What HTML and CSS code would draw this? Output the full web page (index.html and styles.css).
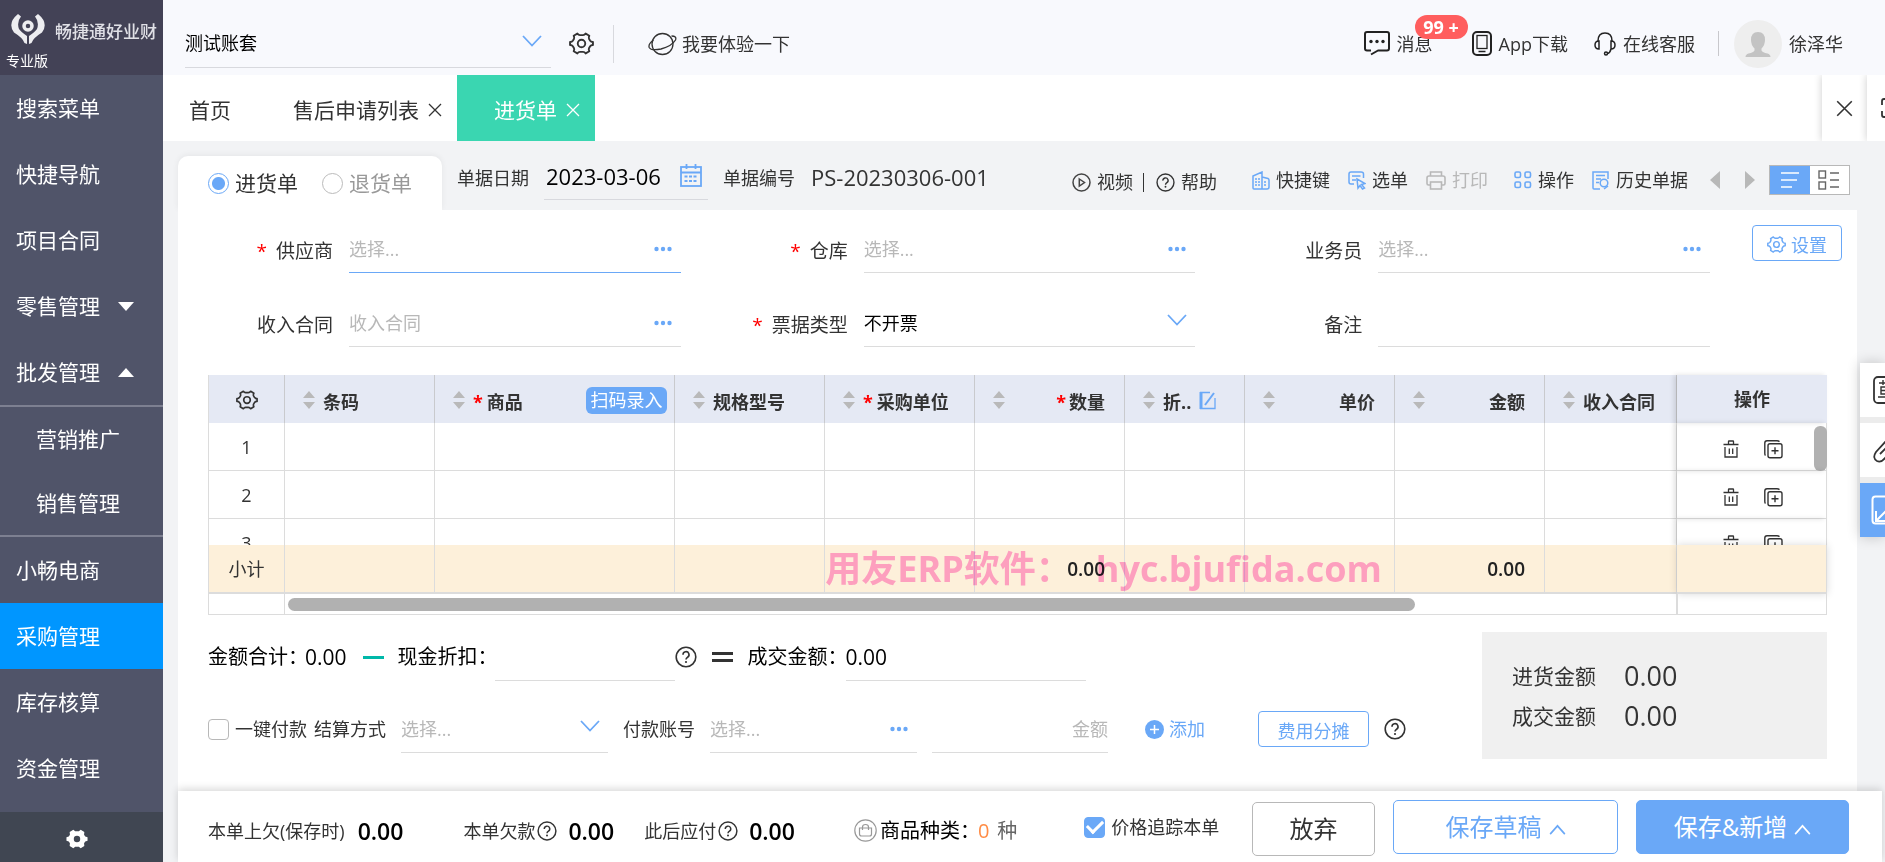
FILE: index.html
```
<!DOCTYPE html>
<html lang="zh-CN">
<head>
<meta charset="utf-8">
<title>进货单</title>
<link rel="stylesheet" href="styles.css">
</head>
<body>
<svg class="defs" aria-hidden="true">
  <symbol id="gear" viewBox="0 0 24 24"><path fill="none" stroke="currentColor" stroke-width="1.8" stroke-linejoin="round" d="M8 2.500 Q9 4 10.500 4 H13.500 Q15 4 16 2.500 L19.500 4.600 Q18.600 6.200 19.200 7.500 L20.300 9.400 Q21.200 10.600 23 10.500 V13.500 Q21.200 13.400 20.300 14.600 L19.200 16.500 Q18.600 17.800 19.500 19.400 L16 21.500 Q15 20 13.500 20 H10.500 Q9 20 8 21.500 L4.500 19.400 Q5.400 17.800 4.800 16.500 L3.700 14.600 Q2.800 13.400 1 13.500 V10.500 Q2.800 10.600 3.700 9.400 L4.800 7.500 Q5.400 6.200 4.500 4.600 Z"/><circle cx="12" cy="12" r="3.600" fill="none" stroke="currentColor" stroke-width="1.800"/></symbol>
  <symbol id="gear-solid" viewBox="0 0 24 24"><path fill="currentColor" fill-rule="evenodd" d="M8 2 L10 3.500 H14 L16 2 L20 4.400 L19.700 7.300 L21 9.400 L23.500 10 V14 L21 14.600 L19.700 16.700 L20 19.600 L16 22 L14 20.500 H10 L8 22 L4 19.600 L4.300 16.700 L3 14.600 L.5 14 V10 L3 9.400 L4.300 7.300 L4 4.400 Z M12 8.500 a3.500 3.500 0 1 0 0 7 a3.500 3.500 0 1 0 0 -7 Z"/></symbol>
  <symbol id="chev" viewBox="0 0 20 12"><path fill="none" stroke="currentColor" stroke-width="1.800" d="M1 1 L10 10.500 L19 1"/></symbol>
  <symbol id="chev-up" viewBox="0 0 18 12"><path fill="none" stroke="currentColor" stroke-width="1.800" d="M1 11 L9 2 L17 11"/></symbol>
  <symbol id="dots" viewBox="0 0 18 6"><g fill="currentColor"><circle cx="2.500" cy="3" r="2.200"/><circle cx="9" cy="3" r="2.200"/><circle cx="15.500" cy="3" r="2.200"/></g></symbol>
  <symbol id="cross" viewBox="0 0 14 14"><path fill="none" stroke="currentColor" stroke-width="1.300" d="M1 1 L13 13 M13 1 L1 13"/></symbol>
  <symbol id="help" viewBox="0 0 22 22"><g fill="none" stroke="currentColor" stroke-width="1.600"><circle cx="11" cy="11" r="9.800"/><path d="M8 8.800 a3 3 0 1 1 4.600 2.400 Q11 12.200 11 13.600"/></g><circle cx="11" cy="16" r="1.100" fill="currentColor"/></symbol>
  <symbol id="trash" viewBox="0 0 16 18"><g fill="none" stroke="currentColor" stroke-width="1.300"><path d="M.5 4.500 H15.500 M5.500 4 V1.500 Q5.500 1 6 1 H10 Q10.500 1 10.500 1.500 V4 M2 7 V17 H14 V7 M6.300 8.500 V14 M9.700 8.500 V14"/></g></symbol>
  <symbol id="copy" viewBox="0 0 19 19"><g fill="none" stroke="currentColor" stroke-width="1.400"><rect x="4" y="3.800" width="14" height="14" rx="2"/><path d="M1.500 15.500 Q.8 14.800 .8 13.500 V3 Q.8 .8 3 .8 H13 Q14.500 .8 15.500 1.600 M11 7.300 V14.300 M7.500 10.800 H14.500"/></g></symbol>
  <symbol id="sort" viewBox="0 0 12 18"><path fill="#b9b9b9" d="M6 0 L12 7 H0 Z M0 11 H12 L6 18 Z"/></symbol>
</svg>
<div class="app">
  <aside class="side">
    <div class="brand">
      <div class="brand-row">
        <svg width="36" height="30" viewBox="0 0 36 30"><g fill="#ededf0"><path d="M8 0 L11 2.500 Q6.500 8 9 15 Q11 18 17 22 V30 L14.500 29 Q13 24 4 18.500 Q-3 9 8 0 Z"/><path d="M28 0 L25 2.500 Q29.500 8 27 15 Q25 18 19 22 V30 L21.500 29 Q23 24 32 18.500 Q39 9 28 0 Z"/></g><circle cx="18" cy="12" r="4" fill="none" stroke="#ededf0" stroke-width="3.500"/></svg>
        <span class="brand-name">畅捷通好业财</span>
      </div>
      <span class="edition">专业版</span>
    </div>
    <nav class="menu">
      <a href="#">搜索菜单</a>
      <a href="#">快捷导航</a>
      <a href="#">项目合同</a>
      <a href="#">零售管理<i class="tri down"></i></a>
      <a href="#">批发管理<i class="tri up"></i></a>
      <div class="sub">
        <a href="#">营销推广</a>
        <a href="#">销售管理</a>
      </div>
      <a href="#">小畅电商</a>
      <a href="#" class="on">采购管理</a>
      <a href="#">库存核算</a>
      <a href="#">资金管理</a>
    </nav>
    <button class="side-set" aria-label="系统设置"><svg width="22" height="22"><use href="#gear-solid"/></svg></button>
  </aside>

  <div class="main">
    <header class="top">
      <div class="account">
        <select aria-label="账套"><option>测试账套</option></select>
        <svg class="blue" width="20" height="12"><use href="#chev"/></svg>
      </div>
      <button class="icon-btn" aria-label="设置"><svg width="25" height="25"><use href="#gear"/></svg></button>
      <span class="vline tall"></span>
      <a href="#" class="trial"><svg width="29" height="24" viewBox="0 0 29 24"><g fill="none" stroke="#333" stroke-width="1.300"><circle cx="14.500" cy="12" r="10.500"/><path d="M5.500 8 Q0 12 1.200 15.500 Q3 19 13 17 Q24 14 27.500 8 Q29 4 23.500 4"/></g></svg>我要体验一下</a>
      <div class="top-right">
        <a href="#" class="msg"><svg width="26" height="25" viewBox="0 0 26 25"><path fill="none" stroke="#222" stroke-width="2" stroke-linejoin="round" d="M7 19.500 H3 Q1 19.500 1 17.500 V3 Q1 1 3 1 H23 Q25 1 25 3 V17.500 Q25 19.500 23 19.500 H14 L7 23.500"/><g fill="#222"><circle cx="7" cy="10.500" r="1.700"/><circle cx="13" cy="10.500" r="1.700"/><circle cx="19" cy="10.500" r="1.700"/></g></svg>消息<b class="badge">99 +</b></a>
        <a href="#" class="phone"><svg width="20" height="25" viewBox="0 0 20 25"><g fill="none" stroke="#222"><rect x="1" y="1" width="18" height="23" rx="4" stroke-width="2"/><rect x="5" y="4.500" width="10" height="13" stroke-width="1.300"/><path d="M6.500 20.500 H13.500" stroke-width="1.500"/></g></svg>App下载</a>
        <a href="#" class="serv"><svg width="22" height="24" viewBox="0 0 22 24"><g fill="none" stroke="#222" stroke-width="1.500"><path d="M4 9 Q4 1 11 1 Q18 1 18 9"/><path d="M5 9 V17 Q1 17 1 13 Q1 9 5 9 Z M17 9 V17 Q21 17 21 13 Q21 9 17 9 Z M17 17 Q16 21 13.500 21.500"/><circle cx="12" cy="21.500" r="1.500"/></g></svg>在线客服</a>
        <span class="vline"></span>
        <a href="#" class="user"><svg width="48" height="48" viewBox="0 0 48 48"><circle cx="24" cy="24" r="24" fill="#eeeeee"/><path fill="#c3c3c3" d="M24 12 q7 0 7 8 q0 5 -3.500 8.500 v2 q1 2 6 3 q3 1 3 3.500 H11.500 q0 -2.500 3 -3.500 q5 -1 6 -3 v-2 Q17 25 17 20 q0 -8 7 -8 Z"/></svg>徐泽华</a>
      </div>
    </header>

    <div class="tabs">
      <a href="#" class="tab home">首页</a>
      <a href="#" class="tab list">售后申请列表<svg width="14" height="14"><use href="#cross"/></svg></a>
      <a href="#" class="tab on">进货单<svg width="14" height="14"><use href="#cross"/></svg></a>
      <button class="tab-tool close" aria-label="关闭全部"><svg width="17" height="17"><use href="#cross"/></svg></button>
      <button class="tab-tool full" aria-label="全屏"><svg width="20" height="20" viewBox="0 0 20 20"><path fill="none" stroke="#333" stroke-width="1.800" d="M1 7 V3 Q1 1 3 1 H7 M1 13 V17 Q1 19 3 19 H7"/></svg></button>
    </div>

    <div class="doc">
      <div class="doc-head">
        <div class="kinds">
          <label><input type="radio" name="kind" checked>进货单</label>
          <label class="dim"><input type="radio" name="kind">退货单</label>
        </div>
        <label class="cap" for="date">单据日期</label>
        <div class="date"><input id="date" type="text" value="2023-03-06"><svg width="22" height="23" viewBox="0 0 22 23"><g fill="none" stroke="#6aa8f7" stroke-width="1.800"><rect x="1" y="3" width="20" height="19"/><path d="M1 8.500 H21 M6.500 0 V5 M15.500 0 V5"/><path stroke-dasharray="3 1.500" d="M4.500 12.500 H18 M4.500 17 H18"/></g></svg></div>
        <span class="cap">单据编号</span>
        <span class="docno">PS-20230306-001</span>
        <div class="tools">
          <a href="#" class="low"><svg width="19" height="19" viewBox="0 0 19 19"><g fill="none" stroke="#444" stroke-width="1.500"><circle cx="9.500" cy="9.500" r="8.500"/><path d="M7.300 6 L12.500 9.500 L7.300 13 Z"/></g></svg>视频</a>
          <span class="bar"></span>
          <a href="#" class="low help-link"><svg width="19" height="19"><use href="#help"/></svg>帮助</a>
          <a href="#" class="t1"><svg width="18" height="19" viewBox="0 0 18 19"><g fill="none" stroke="#6aa8f7" stroke-width="1.500"><path d="M1 17 V5 L10 1 V18 H2 Q1 18 1 17 M10 6 L16 7.500 Q17 8 17 9 V16 Q17 18 15 18 H10"/><path stroke-dasharray="2 1" d="M3 8 H9 M3 11 H9 M3 14 H9 M12 11 H15 M12 14 H15"/></g></svg>快捷键</a>
          <a href="#" class="t2"><svg width="18" height="19" viewBox="0 0 18 19"><g fill="none" stroke="#6aa8f7" stroke-width="1.500"><path d="M6 13 H3 Q1 13 1 11 V3 Q1 1 3 1 H13 Q15.500 1 15.500 3 V7 M4 5 H12.500 M4 9 H8"/><path d="M9 8 L17 12.500 L13.500 13.500 L16.500 17 L14.500 18 L12 14.500 L10 17 Z"/></g></svg>选单</a>
          <a href="#" class="t3 off"><svg width="20" height="19" viewBox="0 0 20 19"><g fill="none" stroke="#b8b8b8" stroke-width="1.600"><path d="M4.500 5 V1 H15.500 V5 M4 14 H2.500 Q1 14 1 12.500 V7 Q1 5 3 5 H17 Q19 5 19 7 V12.500 Q19 14 17.500 14 H16"/><rect x="4.500" y="11" width="11" height="7"/></g></svg>打印</a>
          <a href="#" class="t4"><svg width="18" height="18" viewBox="0 0 18 18"><g fill="none" stroke="#6aa8f7" stroke-width="1.600"><rect x="1" y="1" width="5.500" height="5.500" rx="1.500"/><rect x="11" y="1" width="5.500" height="5.500" rx="1.500"/><rect x="1" y="11" width="5.500" height="5.500" rx="1.500"/><rect x="11" y="11" width="5.500" height="5.500" rx="1.500"/></g></svg>操作</a>
          <a href="#" class="t2"><svg width="18" height="19" viewBox="0 0 18 19"><g fill="none" stroke="#6aa8f7" stroke-width="1.500"><path d="M8 18 H2 Q1 18 1 17 V1 H16 V8 M4 4.500 H13 M4 8 H9 M4 11.500 H7"/><circle cx="12" cy="12" r="3.800"/><path d="M12 18 L16 15"/></g></svg>历史单据</a>
          <button class="step prev" aria-label="上一单"></button>
          <button class="step next" aria-label="下一单"></button>
          <div class="views">
            <button class="on" aria-label="列表视图"><svg width="20" height="18" viewBox="0 0 20 18"><path stroke="#fff" stroke-width="1.600" d="M1 2 H19 M1 9 H17 M1 16 H12"/></svg></button>
            <button aria-label="卡片视图"><svg width="22" height="20" viewBox="0 0 22 20"><g fill="none" stroke="#666" stroke-width="1.400"><rect x="1" y="1" width="6.500" height="7"/><rect x="1" y="12" width="6.500" height="7"/><path d="M12 3 H21 M12 10 H21 M12 17 H21"/></g></svg></button>
          </div>
        </div>
      </div>

      <section class="card">
        <div class="form">
          <div class="fields">
            <label for="f1"><i>*</i>供应商</label>
            <div class="field focus"><input id="f1" placeholder="选择..."><button aria-label="选择供应商"><svg width="18" height="6"><use href="#dots"/></svg></button></div>
            <label for="f2"><i>*</i>仓库</label>
            <div class="field"><input id="f2" placeholder="选择..."><button aria-label="选择仓库"><svg width="18" height="6"><use href="#dots"/></svg></button></div>
            <label for="f3">业务员</label>
            <div class="field"><input id="f3" placeholder="选择..."><button aria-label="选择业务员"><svg width="18" height="6"><use href="#dots"/></svg></button></div>
            <label for="f4">收入合同</label>
            <div class="field"><input id="f4" placeholder="收入合同"><button aria-label="选择收入合同"><svg width="18" height="6"><use href="#dots"/></svg></button></div>
            <label for="f5"><i>*</i>票据类型</label>
            <div class="field drop"><select id="f5"><option>不开票</option></select><svg width="20" height="12"><use href="#chev"/></svg></div>
            <label for="f6">备注</label>
            <div class="field"><input id="f6"></div>
          </div>
          <button class="btn-line set"><svg width="19" height="19"><use href="#gear"/></svg>设置</button>
        </div>

        <div class="grid">
          <table>
            <colgroup><col class="c-no"><col class="c-m"><col class="c-l"><col class="c-m"><col class="c-m"><col class="c-m"><col class="c-s"><col class="c-m"><col class="c-m"><col><col class="c-m"></colgroup>
            <thead>
              <tr>
                <th><svg class="g" width="22" height="22"><use href="#gear"/></svg></th>
                <th><div><svg width="12" height="18"><use href="#sort"/></svg>条码</div></th>
                <th><div><svg width="12" height="18"><use href="#sort"/></svg><i>*</i>商品<button class="scan">扫码录入</button></div></th>
                <th><div><svg width="12" height="18"><use href="#sort"/></svg>规格型号</div></th>
                <th><div><svg width="12" height="18"><use href="#sort"/></svg><i>*</i>采购单位</div></th>
                <th><div><svg width="12" height="18"><use href="#sort"/></svg><span class="r"><i>*</i>数量</span></div></th>
                <th><div><svg width="12" height="18"><use href="#sort"/></svg>折..<svg width="17" height="19" viewBox="0 0 17 19"><g fill="none" stroke="#6aa8f7"><path stroke-width="3" d="M2 1 V18"/><path stroke-width="1.300" d="M11 1.500 H1 M1 17.500 H16 V7"/><path stroke-width="2" d="M6 14 L15 2"/></g></svg></div></th>
                <th><div><svg width="12" height="18"><use href="#sort"/></svg><span class="r">单价</span></div></th>
                <th><div><svg width="12" height="18"><use href="#sort"/></svg><span class="r">金额</span></div></th>
                <th><div><svg width="12" height="18"><use href="#sort"/></svg>收入合同</div></th>
                <th class="act">操作</th>
              </tr>
            </thead>
            <tbody>
              <tr><td>1</td><td></td><td></td><td></td><td></td><td></td><td></td><td></td><td></td><td></td><td class="act"><div class="ops"><button aria-label="删除"><svg width="16" height="18"><use href="#trash"/></svg></button><button aria-label="复制"><svg width="19" height="19"><use href="#copy"/></svg></button></div><span class="vthumb"></span></td></tr>
              <tr><td>2</td><td></td><td></td><td></td><td></td><td></td><td></td><td></td><td></td><td></td><td class="act"><div class="ops"><button aria-label="删除"><svg width="16" height="18"><use href="#trash"/></svg></button><button aria-label="复制"><svg width="19" height="19"><use href="#copy"/></svg></button></div></td></tr>
              <tr class="cut"><td><div class="clip"><span>3</span></div></td><td></td><td></td><td></td><td></td><td></td><td></td><td></td><td></td><td></td><td class="act"><div class="clip"><div class="ops"><button aria-label="删除"><svg width="16" height="18"><use href="#trash"/></svg></button><button aria-label="复制"><svg width="19" height="19"><use href="#copy"/></svg></button></div></div></td></tr>
            </tbody>
            <tfoot>
              <tr class="sum"><td>小计</td><td></td><td></td><td></td><td></td><td class="num">0.00</td><td></td><td></td><td class="num">0.00</td><td></td><td class="act"></td></tr>
              <tr class="scroll"><td></td><td colspan="9"><div class="hthumb"></div></td><td class="act"></td></tr>
            </tfoot>
          </table>
          <div class="mark">用友ERP软件：<span>hyc.bjufida.com</span></div>
        </div>

        <div class="settle">
          <div class="lines">
            <div class="line big">
              <span>金额合计：</span><span class="total">0.00</span><span class="minus"></span>
              <label for="disc">现金折扣：</label><div class="field w180"><input id="disc"></div>
              <svg width="22" height="22"><use href="#help"/></svg><span class="equal"></span>
              <label for="deal">成交金额：</label><div class="field w240"><input id="deal" value="0.00"></div>
            </div>
            <div class="line">
              <label class="pay"><input type="checkbox">一键付款</label>
              <label class="way" for="way">结算方式</label>
              <div class="field drop w207"><select id="way" class="ph"><option>选择...</option></select><svg width="20" height="12"><use href="#chev"/></svg></div>
              <label class="acc" for="acc">付款账号</label>
              <div class="field w207"><input id="acc" placeholder="选择..."><button aria-label="选择付款账号"><svg width="18" height="6"><use href="#dots"/></svg></button></div>
              <div class="field amount"><input aria-label="金额" placeholder="金额"></div>
              <button class="add"><svg width="19" height="19" viewBox="0 0 19 19"><circle cx="9.500" cy="9.500" r="9.500" fill="#6aa8f7"/><path stroke="#fff" stroke-width="1.500" d="M9.500 5 V14 M5 9.500 H14"/></svg>添加</button>
              <button class="btn-line share">费用分摊</button>
              <svg width="22" height="22"><use href="#help"/></svg>
            </div>
          </div>
          <dl class="summary"><dt>进货金额</dt><dd>0.00</dd><dt>成交金额</dt><dd>0.00</dd></dl>
        </div>
      </section>
      <footer class="foot">
        <span>本单上欠(保存时)</span><b>0.00</b>
        <span class="g1">本单欠款</span><svg width="20" height="20"><use href="#help"/></svg><b class="n">0.00</b>
        <span class="g2">此后应付</span><svg width="20" height="20"><use href="#help"/></svg><b class="n">0.00</b>
        <span class="kindcount"><svg width="23" height="23" viewBox="0 0 23 23"><g fill="none" stroke="#999" stroke-width="1.200"><circle cx="11.500" cy="11.500" r="10.700"/><path d="M5.500 9 H17.500 V15 Q17.500 17 15.500 17 H7.500 Q5.500 17 5.500 15 Z M8.500 11 V8 Q8.500 5.500 11.500 5.500 Q14.500 5.500 14.500 8 V11"/></g></svg>商品种类：<em>0</em><small>种</small></span>
        <label class="trace"><input type="checkbox" checked>价格追踪本单</label>
        <div class="actions">
          <button class="b-plain">放弃</button>
          <button class="b-draft">保存草稿<svg width="17" height="11"><use href="#chev-up"/></svg></button>
          <button class="b-save">保存&amp;新增<svg width="17" height="11"><use href="#chev-up"/></svg></button>
        </div>
      </footer>
    </div>
  </div>
</div>
<div class="dock">
  <button aria-label="草稿"><svg width="28" height="28" viewBox="0 0 28 28"><rect x="1" y="1" width="26" height="26" rx="4" fill="none" stroke="#333" stroke-width="1.800"/><path fill="none" stroke="#333" stroke-width="1.400" d="M6 7 H22 M10 4 V9 M8 11 H20 V18 H8 Z M8 14.500 H20 M5 21 H23"/></svg></button>
  <button aria-label="附件"><svg width="26" height="26" viewBox="0 0 26 26"><path fill="none" stroke="#333" stroke-width="1.800" d="M14 3 L3 15 Q-1 21 4 24 Q8 26 12 21 L22 10 M7 17 L16 8"/></svg></button>
  <button class="on" aria-label="收起"><svg width="30" height="30" viewBox="0 0 30 30"><rect x="1.500" y="1.500" width="27" height="27" rx="3" fill="none" stroke="#fff" stroke-width="2"/><path fill="none" stroke="#fff" stroke-width="2" d="M5 16 V26 H15 M5 26 L16 15"/></svg></button>
</div>
</body>
</html>
```
FILE: styles.css
```
* { box-sizing: border-box; }
body { margin: 0; background: #f2f3f5; color: #333; font: 18px/24px "Open Sans", "Noto Sans CJK SC", sans-serif; }
a { color: inherit; text-decoration: none; }
button, input, select { margin: 0; padding: 0; border: 0; background: none; font: inherit; color: inherit; outline: 0; }
select { appearance: none; }
svg { flex: none; display: block; }
i, em { font-style: normal; }
.defs { position: absolute; width: 0; height: 0; }
.blue { color: #6aa8f7; }
.app { display: flex; min-height: 100vh; }

/* sidebar */
.side { flex: none; width: 163px; display: flex; flex-direction: column; background: #505469; color: #fff; }
.brand { height: 75px; background: #434256; padding: 14px 6px 0 10px; }
.brand-row { display: flex; align-items: center; gap: 9px; height: 30px; }
.brand-name { font-size: 17px; font-weight: 500; color: #e0e0e6; white-space: nowrap; padding-top: 6px; }
.edition { display: block; margin: 5px 0 0 -4px; font-size: 14px; }
.menu { font-size: 21px; flex: 1; }
.menu a { display: flex; align-items: center; height: 66px; padding-left: 16px; }
.menu .on { background: #0096ff; }
.sub { border: 1px solid #7d8091; border-width: 2px 0; }
.sub a { height: 64px; padding-left: 36px; }
.tri { margin-left: 18px; border: 8px solid transparent; }
.tri.down { border-top: 9px solid #fff; border-bottom: 0; }
.tri.up { border-bottom: 9px solid #fff; border-top: 0; }
.side-set { height: 50px; background: #404652; color: #fff; display: flex; align-items: center; justify-content: center; padding: 4px 10px 0 0; }

/* header */
.main { flex: 1; min-width: 0; display: flex; flex-direction: column; }
.top { height: 75px; background: #f8f9fd; display: flex; align-items: center; padding: 12px 42px 0 22px; }
.account { width: 366px; height: 48px; display: flex; align-items: center; border-bottom: 1px solid #d8d9de; padding-right: 9px; }
.account select { flex: 1; height: 46px; color: #000; }
.account svg { margin-bottom: 4px; }
.icon-btn { margin-left: 18px; }
.vline { width: 1px; height: 25px; background: #c8c8cc; }
.vline.tall { height: 38px; margin: 0 34px 0 19px; background: #d8d9de; }
.trial, .top-right, .top-right a { display: flex; align-items: center; }
.trial { gap: 5px; }
.top-right { margin-left: auto; white-space: nowrap; }
.top-right a { gap: 7px; }
.msg { position: relative; }
.badge { position: absolute; left: 51px; top: -16px; width: 53px; height: 24px; border-radius: 12px; background: #ff5e5e; color: #fff; text-align: center; }
.phone { margin-left: 39px; }
.serv { margin-left: 26px; }
.top-right .vline { margin: 0 15px 0 23px; }

/* tabs */
.tabs { height: 66px; background: #fff; display: flex; font-size: 21px; overflow: hidden; }
.tab { display: flex; align-items: center; gap: 9px; padding: 4px 15px 0 0; color: #333; }
.home { padding-left: 26px; width: 130px; }
.tab.on { background: #3ad6b1; color: #fff; padding-left: 37px; }
.tab-tool { width: 45px; display: flex; align-items: center; justify-content: center; box-shadow: 0 0 8px rgba(0,0,0,.2); background: #fff; }
.tab-tool.close { margin-left: auto; }
.tab-tool.full { width: 18px; justify-content: flex-start; padding-left: 14px; overflow: hidden; }

/* document heading */
.doc { flex: 1; display: flex; flex-direction: column; padding: 15px 0 0 15px; }
.doc-head { display: flex; height: 54px; padding-right: 35px; white-space: nowrap; }
.kinds { width: 264px; background: #fff; border-radius: 10px 10px 0 0; display: flex; align-items: center; gap: 24px; padding-left: 30px; font-size: 21px; box-shadow: 0 -1px 6px rgba(0,0,0,.06); }
.kinds label { display: flex; align-items: center; gap: 6px; }
.kinds .dim { color: #999; }
input[type=radio] { appearance: none; width: 21px; height: 21px; border: 1px solid #bbb; border-radius: 50%; }
input[type=radio]:checked { border-color: #6aa8f7; background: radial-gradient(circle, #6aa8f7 6px, transparent 7px); }
.cap { margin: 10px 15px 0; }
.date { width: 164px; height: 44px; display: flex; align-items: center; border-bottom: 1px solid #d8d9de; font-size: 22px; color: #000; padding: 0 6px 4px 2px; }
.date input { width: 100%; min-width: 0; }
.docno { font-size: 22px; margin: 9px 0 0 1px; }
.tools { flex: 1; display: flex; align-items: center; justify-content: flex-end; padding-bottom: 6px; }
.tools a { display: flex; align-items: center; gap: 6px; }
.tools .low { padding-top: 4px; }
.bar { width: 1px; height: 19px; background: #333; margin: 4px 12px 0 10px; }
.tools .t1 { margin-left: 35px; }
.tools .t2 { margin-left: 18px; }
.tools .t3 { margin-left: 18px; }
.tools .t4 { margin-left: 26px; }
.tools .off { color: #b8b8b8; }
.step { border: 9px solid transparent; }
.step.prev { border-right: 10px solid #b8b8b8; border-left: 0; margin: 0 25px 0 22px; }
.step.next { border-left: 10px solid #b8b8b8; border-right: 0; margin-right: 14px; }
.views { display: flex; width: 81px; height: 30px; border: 1px solid #b8b8b8; background: #fff; }
.views button { flex: 1; display: flex; align-items: center; justify-content: center; }
.views .on { background: #6aa8f7; }

/* document card */
.card { flex: 1; background: #fff; margin-right: 28px; padding: 15px 30px 0; }
.form { display: flex; gap: 42px; align-items: flex-start; margin-right: -15px; }
.fields { flex: 1; display: grid; grid-template-columns: 141px 1fr 183px 1fr 183px 1fr; row-gap: 26px; }
.fields > label { font-size: 19px; text-align: right; padding: 14px 16px 0 0; height: 48px; }
.fields > label i { color: #f00; margin-right: 9px; }
.fields > .field { min-width: 0; }
.field { height: 48px; display: flex; align-items: center; border-bottom: 1px solid #dcdcdc; padding-right: 9px; color: #6aa8f7; }
.field.focus { border-color: #6aa8f7; }
.field input, .field select { flex: 1; width: 100%; min-width: 0; height: 40px; color: #000; }
.field ::placeholder { color: #b8b8b8; opacity: 1; }
.field button { display: flex; height: 24px; align-items: center; }
.field.drop { padding-right: 8px; }
.drop svg { margin-bottom: 6px; }
.field .ph { color: #b8b8b8; }
.btn-line { border: 1px solid #6aa8f7; border-radius: 4px; color: #6aa8f7; height: 36px; display: flex; align-items: center; justify-content: center; gap: 5px; padding-top: 3px; }
.set { width: 90px; }

/* item table */
.grid { position: relative; margin-top: 28px; }
table { width: 100%; table-layout: fixed; border-collapse: separate; border-spacing: 0; border-left: 1px solid #dcdcdc; }
.c-no { width: 76px; } .c-m { width: 150px; } .c-l { width: 240px; } .c-s { width: 120px; }
th, td { padding: 0; border-right: 1px solid #dcdcdc; }
th { height: 48px; background: #e5e9f4; border-right-color: #c9cacd; font-weight: 700; }
th:last-child { border-right: 0; }
th div { display: flex; align-items: center; gap: 8px; padding: 6px 0 0 18px; height: 48px; white-space: nowrap; }
th div svg { margin-bottom: 4px; }
th i { color: #f00; margin-right: -4px; }
th .r { margin: 0 19px 0 auto; }
th .r i { margin-right: 3px; }
th .g { margin: 2px auto 0; }
.scan { margin: 0 7px 4px auto; width: 81px; height: 27px; border-radius: 6px; background: #6aa8f7; color: #fff; font-weight: 400; }
td { height: 48px; border-bottom: 1px solid #dcdcdc; text-align: center; position: relative; }
td.num { font-size: 19px; font-weight: 600; text-align: right; padding-right: 19px; color: #222; }
.cut td { height: 26px; border-bottom: 0; }
.clip { height: 26px; overflow: hidden; padding-top: 12px; }
.clip .ops { padding-top: 4px; }
td.act, th.act { box-shadow: -3px 0 5px rgba(0,0,0,.12); }
.ops { display: flex; justify-content: center; gap: 25px; padding: 6px 0 0 3px; }
.ops button { display: flex; }
.vthumb { position: absolute; right: -1px; top: 3px; width: 13px; height: 45px; border-radius: 6px; background: #b1b1b1; }
.sum td { background: #fdf0da; height: 49px; border-bottom: 2px solid #dcdcdc; }
.sum .act { box-shadow: 0 0 8px rgba(0,0,0,.15); }
.scroll td { height: 21px; }
.scroll td.act { box-shadow: none; border-left: 1px solid #dcdcdc; }
.hthumb { width: 81%; height: 13px; margin-left: 3px; border-radius: 7px; background: #b1b1b1; }
.mark { position: absolute; left: 38%; bottom: 22px; padding-left: 2px; font: 700 36px/48px "Open Sans", "Noto Sans CJK SC", sans-serif; color: #ffa9df; mix-blend-mode: multiply; white-space: nowrap; pointer-events: none; }
.mark span { margin-left: 24px; }

/* settlement */
.settle { display: flex; justify-content: space-between; margin-top: 17px; }
.lines { display: flex; flex-direction: column; gap: 24px; padding-top: 1px; }
.line { display: flex; align-items: center; height: 48px; white-space: nowrap; }
.big { font-size: 20px; color: #000; }
.big svg { color: #333; }
.total, .big input { font-size: 21px; }
.total { margin-left: -3px; }
.minus { width: 21px; height: 3px; background: #00b8a9; margin: 0 14px 0 16px; }
.equal { width: 21px; height: 10px; border: solid #333; border-width: 3px 0; margin: 0 15px; }
.w180 { width: 180px; margin-left: -3px; }
.w240 { width: 240px; margin-left: -2px; }
.w207 { width: 207px; margin-left: 15px; }
.pay, .trace { display: flex; align-items: center; gap: 6px; }
input[type=checkbox] { appearance: none; width: 21px; height: 21px; border: 1px solid #b8b8b8; border-radius: 4px; display: grid; place-items: center; }
input[type=checkbox]:checked { background: #6aa8f7; border-color: #6aa8f7; }
input[type=checkbox]:checked::after { content: ""; width: 13px; height: 7px; border: solid #fff; border-width: 0 0 3px 3px; transform: rotate(-45deg); margin-bottom: 4px; }
.way { margin-left: 7px; }
.acc { margin-left: 15px; }
.amount { width: 176px; margin-left: 15px; padding-right: 0; }
.amount input { text-align: right; }
.add { display: flex; align-items: center; gap: 5px; color: #6aa8f7; margin-left: 37px; }
.share { width: 111px; margin: 0 15px 0 53px; }
.summary { margin: 0; width: 345px; height: 127px; background: #f0f0f0; display: grid; grid-template-columns: 84px 1fr; column-gap: 28px; grid-auto-rows: 40px; align-content: center; align-items: center; padding-left: 30px; font-size: 21px; }
.summary dd { margin: 0; font-size: 27px; }

/* bottom bar */
.foot { height: 71px; background: #fff; margin-right: 3px; padding: 8px 33px 0 30px; display: flex; align-items: center; box-shadow: 0 -2px 8px rgba(0,0,0,.16); white-space: nowrap; position: relative; }
.foot b { font-size: 23px; font-weight: 600; color: #000; margin-left: 13px; }
.foot b.n { margin-left: 11px; }
.foot > svg { margin-left: 2px; }
.g1 { margin-left: 60px; }
.g2 { margin-left: 30px; }
.kindcount { display: flex; align-items: center; margin-left: 59px; font-size: 20px; color: #000; gap: 3px; }
.kindcount em { color: #ff8c45; margin-left: -5px; }
.kindcount small { font-size: 20px; color: #666; margin-left: 5px; }
.trace { margin-left: 67px; padding-bottom: 7px; }
.actions { margin-left: auto; display: flex; gap: 18px; font-size: 24px; padding-bottom: 6px; }
.actions button { height: 54px; border: 1px solid #6aa8f7; border-radius: 5px; display: flex; align-items: center; justify-content: center; gap: 7px; }
.actions svg { margin-top: 6px; }
.actions .b-plain { width: 123px; border-color: #b8b8b8; margin-top: 2px; }
.b-draft { width: 225px; color: #6aa8f7; }
.b-save { width: 213px; background: #6aa8f7; color: #fff; }

/* right edge dock */
.dock { position: fixed; right: 0; top: 363px; width: 25px; overflow: hidden; display: flex; flex-direction: column; gap: 6px; box-shadow: 0 0 14px rgba(0,0,0,.2); background: #ececec; }
.dock button { height: 54px; background: #fff; display: flex; align-items: center; padding-left: 13px; overflow: hidden; }
.dock .on { background: #6aa8f7; padding-left: 11px; }
```
